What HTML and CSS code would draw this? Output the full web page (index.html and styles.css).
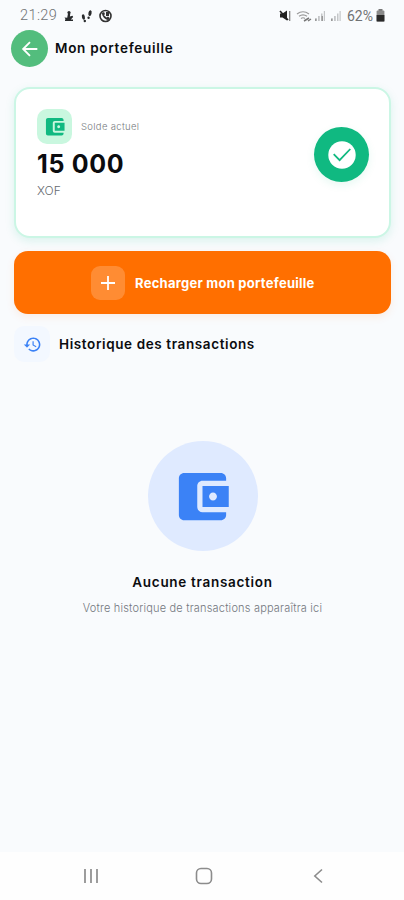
FILE: index.html
```html
<!DOCTYPE html>
<html lang="fr">
<head>
<meta charset="utf-8">
<title>Mon portefeuille</title>
<link rel="stylesheet" href="styles.css">
</head>
<body>
<div class="status">
  <span class="clock">21:29</span>
  <svg class="notif" width="52" height="16" viewBox="0 0 52 16">
    <g fill="#292b2d"><circle cx="7" cy="4.6" r="1.6"/><path d="M6 5.500h2.300l-.4 3 2.600-.8.7 1.200-3.400 3.500H4.400L2.500 9.500l2.700.2zM3 11.500h8V13H3z"/>
    <ellipse cx="21.4" cy="9" rx="1.5" ry="2.7" transform="rotate(-12 21.4 9)"/><circle cx="22.8" cy="13" r="1.2"/>
    <ellipse cx="28" cy="5.2" rx="1.6" ry="2.9" transform="rotate(12 28 5.2)"/><circle cx="26.6" cy="9.8" r="1.2"/></g>
    <circle cx="43.500" cy="8" r="5.500" fill="none" stroke="#333" stroke-width="1.600"/>
    <path d="M40 5l2-1 1 2-1 1.200 2.500 2.300 1.500-1 1.700 1.400-1.200 2c-3 .4-6.600-3.500-6.500-6.900zM44 4h3v4h-3z" fill="#333"/>
  </svg>
  <svg class="signals" width="65" height="16" viewBox="0 0 65 16">
    <path d="M1 5.500h2.500L8 2.500v10L3.500 9.500H1z" fill="#222"/>
    <path d="M1 3l8 9" stroke="#222" stroke-width="1.600"/><path d="M10.700 3v10" stroke="#777" stroke-width="1.200"/>
    <g fill="none" stroke="#999" stroke-width="1.200"><path d="M18 6q6-4.500 12 0M20 8.300q4-3 8 0M22 10.500q2-1.500 4 0"/></g>
    <path d="M25 13l5-3M29 13l3-2" stroke="#777" stroke-width="1.500"/>
    <g fill="#c4c6c8"><path d="M36 10h1.800v3H36zM39 8h1.800v5H39zM42 5.500h1.500v7.500H42zM44.800 3h1.200v10h-1.200zM52 10h1.800v3H52zM55 8h1.800v5H55zM58 5.500h1.500v7.500H58zM60.500 3h1.200v10h-1.200z"/></g>
    <path d="M36 11h1.500v2H36zM42.500 8H44v5h-1.500zM52 11h1.500v2H52z" fill="#999"/>
  </svg>
  <span class="percent">62%</span>
  <svg class="battery" width="9" height="13" viewBox="0 0 9 13"><path d="M2.500 0h4v2h-4z" fill="#777"/><rect x=".6" y="1.500" width="7.800" height="11" rx="1" fill="#8a8a8a"/><path d="M.6 6h7.800v6.500H.6z" fill="#292929"/></svg>
</div>
<header class="header">
  <div class="back"><svg width="22" height="22" viewBox="0 0 24 24"><path d="M20 12H4.800M12 4.500 4.500 12l7.500 7.500" fill="none" stroke="#fff" stroke-width="2"/></svg></div>
  <h1 class="title">Mon portefeuille</h1>
</header>
<main class="main">
  <section class="card">
    <div class="balance">
      <div class="balance-head">
        <div class="wallet-box"><svg width="23.500" height="23.500" viewBox="0 0 24 24"><path d="M21 18v1c0 1.100-.9 2-2 2H5c-1.110 0-2-.9-2-2V5c0-1.100.89-2 2-2h14c1.100 0 2 .9 2 2v1h-9c-1.110 0-2 .9-2 2v8c0 1.100.89 2 2 2h9zm-9-2h10V8H12v8zm4-2.500c-.83 0-1.500-.67-1.500-1.500s.67-1.500 1.500-1.500 1.500.67 1.500 1.500-.67 1.500-1.500 1.500z" fill="#10b981"/></svg></div>
        <span class="label">Solde actuel</span>
      </div>
      <div class="amount">15 000</div>
      <div class="currency">XOF</div>
    </div>
    <div class="check"><svg width="28" height="28" viewBox="0 0 28 28"><circle cx="14" cy="14" r="13.700" fill="#fff"/><path d="M5.700 13.200l5.900 5.900L22.300 8" fill="none" stroke="#10b981" stroke-width="1.800"/></svg></div>
  </section>
  <div class="recharge">
    <span class="plus"><svg width="16" height="16" viewBox="0 0 16 16"><path d="M8 1v14M1 8h14" stroke="#fff" stroke-width="1.800"/></svg></span>
    <span class="recharge-text">Recharger mon portefeuille</span>
  </div>
  <div class="history">
    <span class="history-icon"><svg width="19" height="19" viewBox="0 0 24 24"><path d="M13 3c-4.970 0-9 4.030-9 9H1l3.890 3.890.07.14L9 12H6c0-3.870 3.130-7 7-7s7 3.130 7 7-3.130 7-7 7c-1.930 0-3.680-.79-4.940-2.060l-1.420 1.420C8.270 19.990 10.510 21 13 21c4.970 0 9-4.030 9-9s-4.030-9-9-9zm-1 5v5l4.280 2.540.72-1.210-3.500-2.080V8H12z" fill="#3b82f6"/></svg></span>
    <h2 class="history-title">Historique des transactions</h2>
  </div>
  <section class="empty">
    <div class="empty-circle"><svg width="63" height="63" viewBox="0 0 24 24"><path d="M21 18v1c0 1.100-.9 2-2 2H5c-1.110 0-2-.9-2-2V5c0-1.100.89-2 2-2h14c1.100 0 2 .9 2 2v1h-9c-1.110 0-2 .9-2 2v8c0 1.100.89 2 2 2h9zm-9-2h10V8H12v8zm4-2.500c-.83 0-1.500-.67-1.500-1.500s.67-1.500 1.500-1.500 1.500.67 1.500 1.500-.67 1.500-1.500 1.500z" fill="#3b82f6"/></svg></div>
    <h3 class="empty-title">Aucune transaction</h3>
    <p class="empty-text">Votre historique de transactions apparaîtra ici</p>
  </section>
</main>
<nav class="nav">
  <svg width="16" height="16" viewBox="0 0 16 16"><path d="M2 1v14M8 1v14M14 1v14" stroke="#8c8c8c" stroke-width="1.700"/></svg>
  <svg width="18" height="18" viewBox="0 0 18 18"><rect x="1.500" y="1.500" width="15" height="15" rx="4.500" fill="none" stroke="#8c8c8c" stroke-width="1.600"/></svg>
  <svg width="10" height="16" viewBox="0 0 10 16"><path d="M9 1.500 1.800 8 9 14.500" fill="none" stroke="#8c8c8c" stroke-width="1.600"/></svg>
</nav>
</body>
</html>
```
FILE: styles.css
```css
* { box-sizing: border-box; margin: 0; padding: 0; }
body {
  width: 404px; height: 900px; overflow: hidden;
  display: flex; flex-direction: column;
  background: #f9fbfd; color: #0b0c0f;
  font-family: Inter, Roboto, sans-serif;
}
svg { display: block; flex: none; }
span, h1, h2, h3, p, .amount, .currency { white-space: nowrap; }
.status { height: 30px; display: flex; align-items: center; padding: 1px 19px 0 20px; font-family: Roboto, sans-serif; font-size: 14.500px; color: #707274; }
.clock { width: 38px; font-weight: 300; letter-spacing: .4px; }
.notif { margin-left: 4px; }
.signals { margin-left: auto; }
.percent { margin-left: 3px; width: 28px; font-size: 14px; }
.battery { margin-left: 1px; }
.header { height: 37px; display: flex; align-items: center; padding-left: 11px; }
.back { width: 37px; height: 37px; border-radius: 50%; background: #53bd7d; display: flex; align-items: center; justify-content: center; }
.title { margin: -2px 0 0 7px; font-size: 13.500px; font-weight: 600; line-height: 18px; letter-spacing: .72px; }
.main { flex: 1; display: flex; flex-direction: column; padding: 20px 13px 0 14px; }
.card { height: 151px; display: flex; justify-content: space-between; padding: 20px 20px 0 21px; border: 2px solid #cbf6e5; border-radius: 16px; background: #fff; box-shadow: 0 3px 10px rgba(16,185,129,.13); }
.balance-head { display: flex; align-items: center; height: 35px; }
.wallet-box { width: 35px; height: 35px; border-radius: 10px; background: #c9f7df; display: flex; align-items: center; justify-content: center; }
.label { margin-left: 9px; font-size: 9.500px; font-weight: 300; letter-spacing: .33px; color: #777b80; }
.amount { margin-top: 4px; font-size: 25px; font-weight: 700; line-height: 32px; letter-spacing: .65px; }
.currency { margin-top: 2px; font-size: 12px; font-weight: 300; line-height: 17px; color: #65696f; }
.check { margin-top: 18px; width: 55px; height: 55px; border-radius: 50%; background: #10b981; display: flex; align-items: center; justify-content: center; box-shadow: 0 3px 8px rgba(16,185,129,.1); }
.recharge { margin-top: 13px; height: 63px; border-radius: 14px; background: #ff6f00; color: #fff; display: flex; align-items: center; padding-left: 77px; box-shadow: 0 3px 8px rgba(255,111,0,.1); }
.plus { width: 34px; height: 34px; border-radius: 9px; background: #ff8c33; display: flex; align-items: center; justify-content: center; }
.recharge-text { margin-left: 10px; font-size: 13px; font-weight: 700; letter-spacing: .26px; }
.history { margin-top: 12px; height: 36px; display: flex; align-items: center; }
.history-icon { width: 36px; height: 36px; border-radius: 10px; background: #f3f8ff; display: flex; align-items: center; justify-content: center; }
.history-title { margin-left: 9px; font-size: 13.500px; font-weight: 600; letter-spacing: .61px; }
.empty { margin-top: 79px; display: flex; flex-direction: column; align-items: center; }
.empty-circle { width: 110px; height: 110px; border-radius: 50%; background: #dfeaff; display: flex; align-items: center; justify-content: center; }
.empty-title { margin-top: 22px; font-size: 13.500px; font-weight: 600; line-height: 18px; letter-spacing: .7px; }
.empty-text { margin-top: 9px; font-size: 11px; font-weight: 300; line-height: 16px; letter-spacing: .19px; color: #73777d; }
.nav { height: 48px; background: #fefefe; display: grid; grid-template-columns: 182px 44px 178px; align-items: center; justify-items: center; }
.nav svg { margin-top: -1px; }
.nav svg:last-child { margin-left: 5px; }
```
